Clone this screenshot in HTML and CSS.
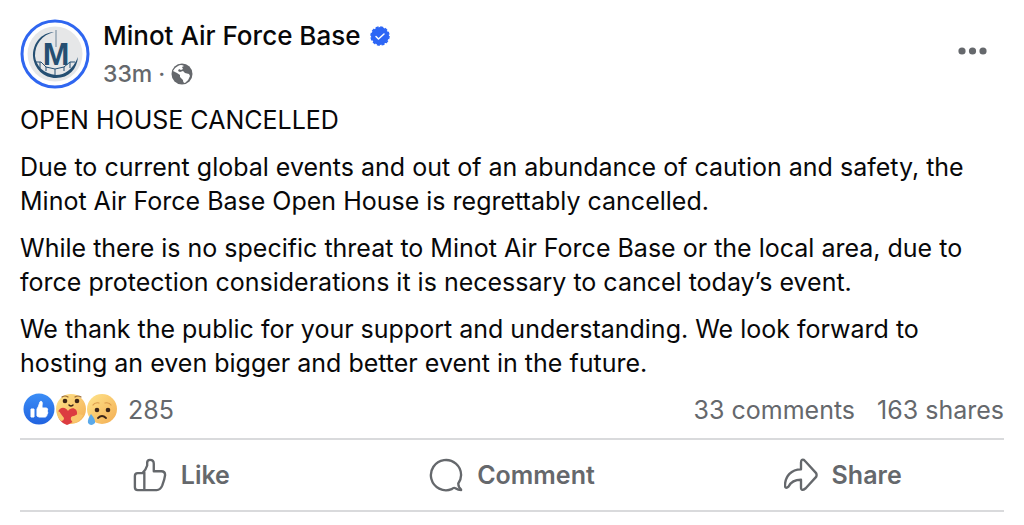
FILE: index.html
```html
<!DOCTYPE html>
<html lang="en">
<head>
    <meta charset="UTF-8">
    <meta name="viewport" content="width=device-width, initial-scale=1.0">
    <title>Minot Air Force Base</title>
    <link rel="stylesheet" href="styles.css">
</head>
<body>
    <article class="post">
        <header class="post-header">
            <a href="#" class="avatar" aria-label="Minot Air Force Base">
                <svg viewBox="0 0 70 70" aria-hidden="true">
                    <circle cx="35" cy="35" r="33" fill="#fff" stroke="#2f66f0" stroke-width="3"/>
                    <circle cx="35" cy="35" r="27.5" fill="#e6e7e8"/>
                    <path d="M34 13C21 14 13 24 13 37C14 50 24 59 36 59C49 59 57 50 58 38C53 50 45 56 36 56C24 55 16 47 15 37C15 25 22 16 34 13Z" fill="#254f72"/>
                    <path d="M16 43L21 43L26 48L35 50L44 48L50 43L55 43M20 43V49M26 48V52M35 50V57M44 48V52M50 43V49" fill="none" stroke="#254f72" stroke-width="1"/>
                    <path d="M36 11V28" stroke="#6d8498" stroke-width="1"/>
                    <text class="logo-letter" x="36" y="46" text-anchor="middle">M</text>
                </svg>
            </a>
            <div class="post-meta">
                <h1 class="page-name">
                    <a href="#">Minot Air Force Base</a>
                    <svg class="verified" viewBox="0 0 20 20" role="img" aria-label="Verified">
                        <circle cx="10" cy="10" r="9" fill="#2d66f5"/>
                        <circle cx="10" cy="10" r="9" fill="none" stroke="#2d66f5" stroke-width="1.5" stroke-dasharray="3 1.71"/>
                        <path d="M6 10.5L8.5 13L14 8" fill="none" stroke="#fff" stroke-width="1.5" stroke-linecap="round" stroke-linejoin="round"/>
                    </svg>
                </h1>
                <div class="post-time">
                    <a href="#">33m</a>
                    <span class="dot">·</span>
                    <svg class="globe" viewBox="0 0 22 22" role="img" aria-label="Public">
                        <circle cx="11" cy="11" r="10.5" fill="#65686c"/>
                        <path d="M2 8Q3 5 7 3Q10 1 13 3L11 4L12 6L10 7L8 6L7 8L9 9L12 8L14 10L18 11L19 13Q18 17 14 20Q12 20 12 17L9 14L9 12L6 10L4 9Z" fill="#fff"/>
                    </svg>
                </div>
            </div>
            <button type="button" class="more" aria-label="More options">
                <svg viewBox="0 0 30 8" aria-hidden="true">
                    <circle cx="4" cy="4" r="3.6"/>
                    <circle cx="14.5" cy="4" r="3.6"/>
                    <circle cx="25" cy="4" r="3.6"/>
                </svg>
            </button>
        </header>

        <div class="post-body">
            <p>OPEN HOUSE CANCELLED</p>
            <p>Due to current global events and out of an abundance of caution and safety, the Minot Air Force Base Open House is regrettably cancelled.</p>
            <p>While there is no specific threat to Minot Air Force Base or the local area, due to force protection considerations it is necessary to cancel today’s event.</p>
            <p>We thank the public for your support and understanding. We look forward to hosting an even bigger and better event in the future.</p>
        </div>

        <div class="post-stats">
            <a href="#" class="reactions">
                <svg viewBox="0 0 98 34" aria-hidden="true">
                    <defs>
                        <linearGradient id="blue" x2="0" y2="1">
                            <stop offset="0" stop-color="#3b8df6"/>
                            <stop offset="1" stop-color="#2163e0"/>
                        </linearGradient>
                        <linearGradient id="yellow" x2="1" y2="1">
                            <stop offset="0" stop-color="#ffe58c"/>
                            <stop offset="1" stop-color="#f3ad52"/>
                        </linearGradient>
                    </defs>
                    <!-- sad -->
                    <circle cx="82" cy="16" r="15" fill="url(#yellow)"/>
                    <path d="M73 12Q75 9 79 10M85 10Q89 9 91 12" fill="none" stroke="#d99a4c" stroke-width="1.2" stroke-linecap="round"/>
                    <circle cx="77" cy="17" r="2.3" fill="#3b2518"/>
                    <circle cx="88" cy="17" r="2.3" fill="#3b2518"/>
                    <path d="M78 25Q82 21 86 25" fill="none" stroke="#3b2518" stroke-width="1.8" stroke-linecap="round"/>
                    <path d="M71 21Q76 27 75 30Q71 34 68 30Q67 27 71 21Z" fill="#5aa9ea"/>
                    <!-- care -->
                    <circle cx="51" cy="16" r="16" fill="#fff"/>
                    <circle cx="51" cy="16" r="15" fill="url(#yellow)"/>
                    <path d="M42 4Q45 2 48 4M55 4Q58 2 61 4" fill="none" stroke="#9a6a35" stroke-width="1.2" stroke-linecap="round"/>
                    <circle cx="45" cy="8" r="2.3" fill="#3b2518"/>
                    <circle cx="57" cy="8" r="2.3" fill="#3b2518"/>
                    <path d="M49 12Q51 14 53 12" fill="none" stroke="#3b2518" stroke-width="1.5" stroke-linecap="round"/>
                    <path d="M48 18C51 13 58 15 57 21C56 27 52 30 47 32C41 30 37 25 38 19C40 13 46 14 48 18Z" fill="#dc3c40"/>
                    <path d="M37 19Q39 17 41 21L44 25Q44 28 41 28Q37 25 37 19ZM63 22Q58 20 54 23Q50 23 51 27Q53 31 57 29Q62 26 63 22Z" fill="#f9c76c"/>
                    <!-- like -->
                    <circle cx="19" cy="16" r="16" fill="#fff"/>
                    <circle cx="19" cy="16" r="15.5" fill="url(#blue)"/>
                    <path d="M11 16H14V24H11ZM17 16C19 13 19 11 20 9C21 7 23 9 22 12L22 15H26C28 15 28 17 27 18C28 19 28 21 27 21C27 23 26 24 25 24H19L17 23Z" fill="#fff" stroke="#fff" stroke-linejoin="round"/>
                </svg>
                <span>285</span>
            </a>
            <div class="counts">
                <a href="#">33 comments</a>
                <a href="#">163 shares</a>
            </div>
        </div>

        <div class="actions">
            <button type="button">
                <svg viewBox="0 0 36 36" aria-hidden="true">
                    <path d="M2 19Q2 16 5 16H10Q14 12 15 8V5Q15 2 18 2Q22 2 22 6V14H30Q34 14 34 18L33 23L31 29Q29 34 25 34H5Q2 34 2 31ZM12 15V33"/>
                </svg>
                <span>Like</span>
            </button>
            <button type="button">
                <svg viewBox="0 0 36 36" aria-hidden="true">
                    <path d="M31 27C33 24 34 21 34 18A16 16 0 1 0 24 33Q26 31 28 32Q31 34 34 34Q34 33 32 31Q31 29 31 27Z"/>
                </svg>
                <span>Comment</span>
            </button>
            <button type="button">
                <svg viewBox="0 0 36 36" aria-hidden="true">
                    <path d="M18 12V5Q18 1 21 2L23 4L34 16Q35 18 34 20L23 32Q18 36 18 31V23C10 23 7 26 5 30Q2 33 1 30C1 19 8 12 18 12Z"/>
                </svg>
                <span>Share</span>
            </button>
        </div>
    </article>
</body>
</html>
```

FILE: styles.css
```css
* { box-sizing: border-box; }
body {
    margin: 0;
    background-color: #fff;
    color: #080809;
    font-family: Inter, "Liberation Sans", sans-serif;
    font-size: 25px;
    line-height: 34px;
}
a { color: inherit; text-decoration: none; }
svg { display: block; flex: none; }
button {
    padding: 0;
    border: none;
    background: none;
    color: #65686c;
    font: inherit;
    cursor: pointer;
}
.post { padding: 19px 20px 0; }
.post-header { display: flex; gap: 13px; }
.avatar svg { width: 70px; height: 70px; }
.logo-letter {
    fill: #254f72;
    font-family: "Liberation Sans", sans-serif;
    font-size: 32px;
    font-weight: bold;
}
.post-meta { flex: 1; }
.page-name {
    display: flex;
    align-items: center;
    gap: 10px;
    margin: 0 0 4px;
    font-size: 26px;
    font-weight: 500;
}
.verified { width: 20px; height: 20px; }
.post-time {
    display: flex;
    align-items: center;
    gap: 6px;
    color: #65686c;
    font-size: 23px;
    font-weight: 500;
}
.globe { width: 22px; height: 22px; }
.more { align-self: center; padding: 0 16px 8px 0; }
.more svg { width: 30px; height: 8px; fill: #65686c; }
.post-body { margin-top: 12px; }
.post-body p { margin: 0 0 13px; }
.post-stats {
    display: flex;
    justify-content: space-between;
    padding-bottom: 11px;
    border-bottom: 2px solid #d9dadc;
    color: #65686c;
}
.reactions { display: flex; align-items: center; gap: 10px; }
.reactions svg { width: 98px; height: 34px; }
.counts { display: flex; gap: 22px; }
.actions {
    display: grid;
    grid-template-columns: repeat(3, 1fr);
    gap: 8px;
    border-bottom: 2px solid #d9dadc;
}
.actions button {
    display: flex;
    align-items: center;
    justify-content: center;
    gap: 14px;
    height: 70px;
    font-weight: 600;
}
.actions svg {
    width: 34px;
    height: 34px;
    fill: none;
    stroke: #65686c;
    stroke-width: 2.5;
    stroke-linecap: round;
    stroke-linejoin: round;
}
```
